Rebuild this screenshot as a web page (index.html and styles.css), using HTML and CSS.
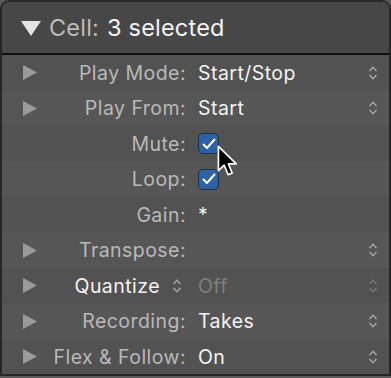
FILE: index.html
```html
<!DOCTYPE html>
<html lang="en">
	<head>
		<meta charset="UTF-8" />
		<meta name="viewport" content="width=device-width, initial-scale=1.0" />
		<title>Cell Inspector</title>
		<link rel="stylesheet" href="styles.css">
	</head>
	<body>
		<div class="panel">
			<div class="header">
				<svg class="disclosure-open" width="20" height="15" viewBox="0 0 20 15"><polygon points="0,0 20,0 10,15" /></svg>
				<span class="header-label">Cell:</span>
				<span class="header-value">3 selected</span>
			</div>

			<div class="rows">
				<div class="row">
					<svg class="tri" width="14" height="15" viewBox="0 0 14 15"><polygon points="0,0 14,7.5 0,15" /></svg>
					<span class="label">Play Mode:</span>
					<span class="value">Start/Stop</span>
					<svg class="updown" width="10" height="18" viewBox="0 0 10 18"><path d="M1.5 7 L5 3.2 L8.5 7 M1.5 11 L5 14.8 L8.5 11" /></svg>
				</div>
				<div class="row alt">
					<svg class="tri" width="14" height="15" viewBox="0 0 14 15"><polygon points="0,0 14,7.5 0,15" /></svg>
					<span class="label">Play From:</span>
					<span class="value">Start</span>
					<svg class="updown" width="10" height="18" viewBox="0 0 10 18"><path d="M1.5 7 L5 3.2 L8.5 7 M1.5 11 L5 14.8 L8.5 11" /></svg>
				</div>
				<div class="row">
					<span class="tri-space"></span>
					<span class="label">Mute:</span>
					<span class="value"><span class="check"><svg width="14" height="12" viewBox="0 0 14 12"><path d="M1.5 6.5 L5 10 L12.5 1.5" /></svg></span></span>
				</div>
				<div class="row alt">
					<span class="tri-space"></span>
					<span class="label">Loop:</span>
					<span class="value"><span class="check"><svg width="14" height="12" viewBox="0 0 14 12"><path d="M1.5 6.5 L5 10 L12.5 1.5" /></svg></span></span>
				</div>
				<div class="row">
					<span class="tri-space"></span>
					<span class="label">Gain:</span>
					<span class="value">*</span>
				</div>
				<div class="row alt">
					<svg class="tri" width="14" height="15" viewBox="0 0 14 15"><polygon points="0,0 14,7.5 0,15" /></svg>
					<span class="label">Transpose:</span>
					<span class="value"></span>
					<svg class="updown" width="10" height="18" viewBox="0 0 10 18"><path d="M1.5 7 L5 3.2 L8.5 7 M1.5 11 L5 14.8 L8.5 11" /></svg>
				</div>
				<div class="row">
					<svg class="tri" width="14" height="15" viewBox="0 0 14 15"><polygon points="0,0 14,7.5 0,15" /></svg>
					<span class="label label-menu">Quantize <svg class="updown small" width="10" height="18" viewBox="0 0 10 18"><path d="M1.5 7 L5 3.2 L8.5 7 M1.5 11 L5 14.8 L8.5 11" /></svg></span>
					<span class="value dim">Off</span>
					<svg class="updown faint" width="10" height="18" viewBox="0 0 10 18"><path d="M1.5 7 L5 3.2 L8.5 7 M1.5 11 L5 14.8 L8.5 11" /></svg>
				</div>
				<div class="row alt">
					<svg class="tri" width="14" height="15" viewBox="0 0 14 15"><polygon points="0,0 14,7.5 0,15" /></svg>
					<span class="label">Recording:</span>
					<span class="value">Takes</span>
					<svg class="updown" width="10" height="18" viewBox="0 0 10 18"><path d="M1.5 7 L5 3.2 L8.5 7 M1.5 11 L5 14.8 L8.5 11" /></svg>
				</div>
				<div class="row">
					<svg class="tri" width="14" height="15" viewBox="0 0 14 15"><polygon points="0,0 14,7.5 0,15" /></svg>
					<span class="label">Flex &amp; Follow:</span>
					<span class="value">On</span>
					<svg class="updown" width="10" height="18" viewBox="0 0 10 18"><path d="M1.5 7 L5 3.2 L8.5 7 M1.5 11 L5 14.8 L8.5 11" /></svg>
				</div>
			</div>

			<!-- mouse pointer over the Mute checkbox -->
			<svg class="cursor" width="22" height="32" viewBox="0 0 13 19">
				<path d="M0.8 0.8 L0.8 15.2 L4.2 12 L6.6 17.6 L9 16.6 L6.7 11.2 L11.4 11.2 Z" />
			</svg>
		</div>
	</body>
</html>
```

FILE: styles.css
```css
html,
body {
	margin: 0;
	padding: 0;
}
body {
	width: 391px;
	height: 378px;
	background-color: #5a5a5a;
	font-family: Inter, "Noto Sans", sans-serif;
	overflow: hidden;
}
.panel {
	position: relative;
	box-sizing: border-box;
	width: 391px;
	border: 2px solid #272727;
	border-radius: 9px 9px 0 0;
	background-color: #545454;
	overflow: hidden;
}
.header {
	display: flex;
	align-items: center;
	height: 51px;
	padding-left: 19px;
	background-color: #474747;
	border-bottom: 2px solid #111;
	font-size: 23.5px;
	letter-spacing: 0.2px;
}
.disclosure-open {
	fill: #e4e4e4;
	margin-right: 8px;
	margin-top: 1px;
}
.header-label {
	color: #bcbcbc;
	margin-right: 8px;
}
.header-value {
	color: #f4f4f4;
}
.rows {
	display: flex;
	flex-direction: column;
}
.row {
	display: flex;
	align-items: center;
	height: 35px;
	padding-left: 21px;
	padding-right: 11px;
	background-color: #525252;
	font-size: 19.5px;
	letter-spacing: 0.45px;
}
.row.alt {
	height: 36px;
	background-color: #565656;
}
.tri,
.tri-space {
	width: 14px;
	flex: none;
	fill: #9b9b9b;
}
.label {
	width: 149px;
	flex: none;
	text-align: right;
	color: #b9b9b9;
}
.label-menu {
	display: flex;
	justify-content: flex-end;
	align-items: center;
	gap: 12px;
	color: #f2f2f2;
}
.value {
	flex: 1;
	margin-left: 12px;
	color: #f3f3f3;
	display: flex;
	align-items: center;
}
.value.dim {
	color: #808080;
}
.updown {
	flex: none;
	fill: none;
	stroke: #a8a8a8;
	stroke-width: 1.4;
}
.updown.small {
	margin-right: 4px;
}
.updown.faint {
	stroke: #7a7a7a;
}
.check {
	box-sizing: border-box;
	display: flex;
	align-items: center;
	justify-content: center;
	width: 21px;
	height: 21px;
	border-radius: 5px;
	background-color: #2f62a3;
	border: 1px solid #1c2f4a;
}
.check svg {
	fill: none;
	stroke: #ffffff;
	stroke-width: 2;
	stroke-linecap: round;
	stroke-linejoin: round;
}
.cursor {
	position: absolute;
	left: 215px;
	top: 143px;
	fill: #000;
	stroke: #fff;
	stroke-width: 1;
	stroke-linejoin: round;
}
```
